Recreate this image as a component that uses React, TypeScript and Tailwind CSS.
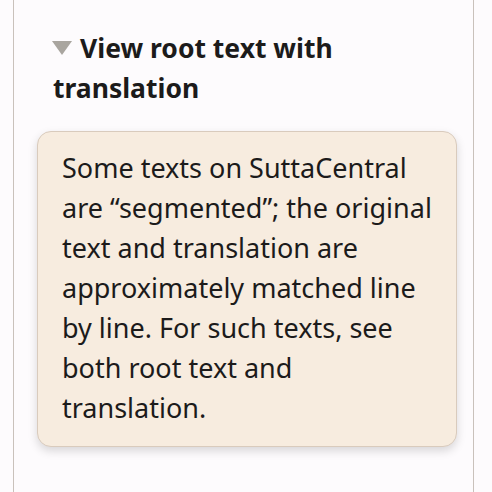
import React from "react";

export default function App() {
  const lines = [
    "Some texts on SuttaCentral",
    "are “segmented”; the original",
    "text and translation are",
    "approximately matched line",
    "by line. For such texts, see",
    "both root text and",
    "translation.",
  ];
  return (
    <div className="w-[492px] h-[492px] bg-[#fdfbfd] overflow-hidden" style={{ fontFamily: "'Noto Sans', sans-serif" }}>
      <div className="ml-[13px] w-[461px] h-[492px] border-x border-[#c9c1bb] pt-[28px] pl-[39px] pr-[16px]">
        <div className="text-[26.5px] leading-[40px] font-bold text-[#1c1b1b]">
          <span className="inline-block w-[20px] h-[14px] mr-[8px] -ml-[1px] bg-[#a9a59f] [clip-path:polygon(0_0,100%_0,50%_100%)] align-[3px]" />
          View root text with translation
        </div>
        <div className="mt-[23px] -ml-[16px] w-[420px] rounded-[14px] border border-[#d9cbbd] bg-[#f7ecdf] shadow-[0_4px_10px_rgba(0,0,0,0.15)] pl-[24px] pr-[10px] pt-[16px] pb-[18px] text-[27px] leading-[40px] text-[#1c1b1b]">
          {lines.map((l) => (
            <div key={l} className="whitespace-nowrap">{l}</div>
          ))}
        </div>
      </div>
    </div>
  );
}
